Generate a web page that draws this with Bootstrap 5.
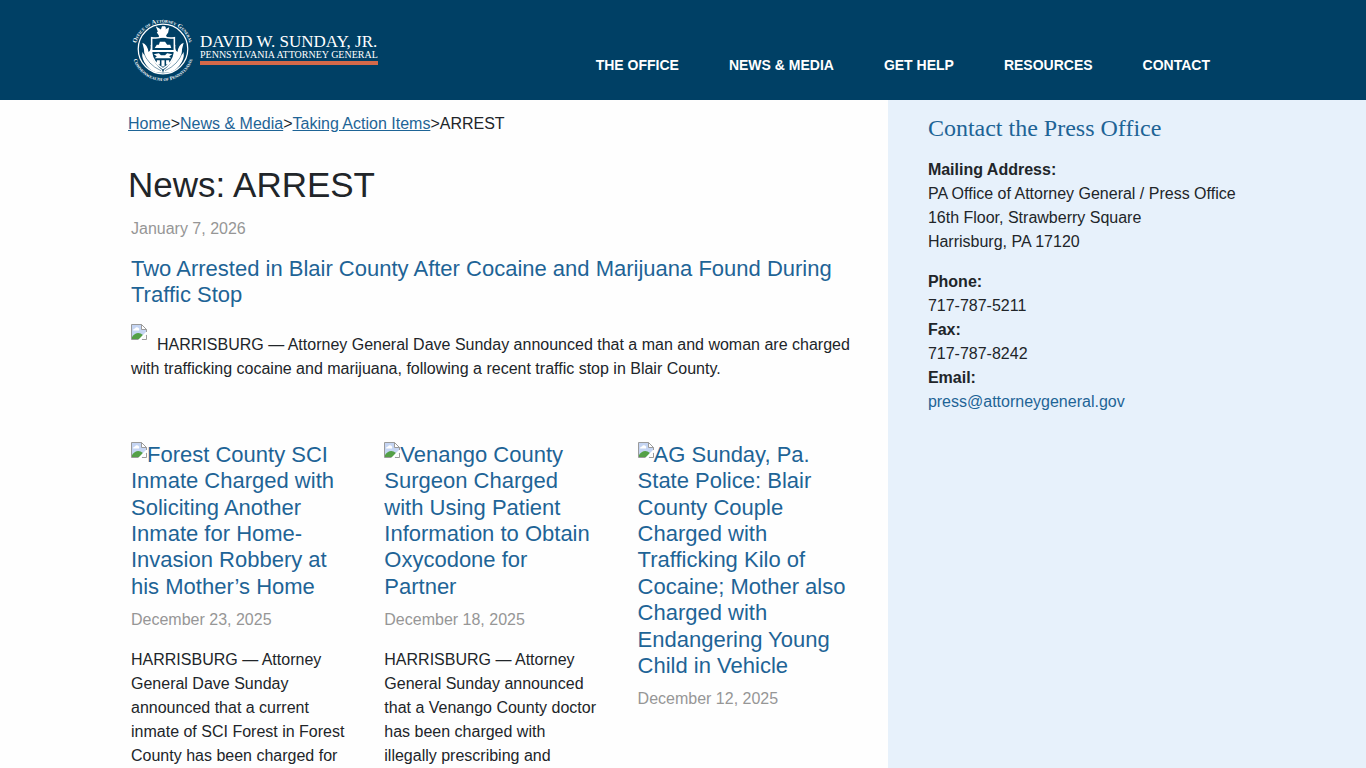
<!DOCTYPE html>
<html lang="en">
<head>
<meta charset="utf-8">
<meta name="viewport" content="width=device-width, initial-scale=1">
<title>News: ARREST</title>
<link href="https://cdn.jsdelivr.net/npm/bootstrap@5.3.0/dist/css/bootstrap.min.css" rel="stylesheet">
<style>
  :root { --navy: #004065; --link: #1e6496; --pale: #e7f1fb; --muted: #969696; }
  body { font-family: "Liberation Sans", Arial, sans-serif; font-size: 16px; line-height: 24px; color: #212529; background: #fefefe; }
  a { color: var(--link); }
  .site-header { background: var(--navy); min-height: 100px; padding: 0 131px 2px; }
  .brand { gap: 5px; }
  .brand-seal { width: 64px; height: 64px; }
  .brand-words { font-family: "Liberation Serif", "Times New Roman", serif; color: #fff; border-bottom: 4px solid #d4694a; padding-bottom: 1px; white-space: nowrap; }
  .brand-name { font-size: 17px; line-height: 16px; }
  .brand-role { font-size: 10px; line-height: 10px; }
  .site-nav { padding-top: 32px; }
  .site-nav .nav-link { color: #fff; font-size: 14px; font-weight: 700; line-height: 24px; padding: 4px 25px; text-transform: uppercase; }
  .main-col { width: 65%; padding: 12px 0 0 128px; }
  .side-col { width: 35%; padding: 15px 40px; background: var(--pale); }
  .page-title { font-size: 35px; line-height: 42px; margin: 28px 0 11px; font-weight: 400; }
  .story { padding: 0 34px 0 3px; }
  .story-title { font-size: 22px; line-height: 1.2; font-weight: 400; margin: 0; }
  .lead-title { margin: 15px 0; }
  .story-date { color: var(--muted); }
  .story-row { margin-top: 61px; }
  .thumb { width: 16px; height: 16px; vertical-align: top; }
  .thumb-lead { vertical-align: baseline; margin: 0 10px 10px 0; }
  .side-title { font-family: "Liberation Serif", "Times New Roman", serif; font-size: 24px; line-height: 26px; color: var(--link); margin: 0 0 17px; font-weight: 400; }
</style>
</head>
<body class="d-flex flex-column min-vh-100">
<svg class="d-none" aria-hidden="true">
  <symbol id="missing" viewBox="0 0 16 16">
    <path d="M.5.5h10l5 5v5l-5 5H.5z" fill="#c5d5f3"/>
    <path d="M2 6.500q0-2 2-2 1-2 3-1 2 1 1 3z" fill="#fff"/>
    <path d="M1 15v-2q5-7 11-2l-3 4z" fill="#54a047"/>
    <path d="M16 7v3l-6 6H7z" fill="#fff"/>
    <path d="M.5 15.500V.5h10l5 5V8M.5 15.500h7M11 15.500h4.500V11" fill="none" stroke="#9b9b9b"/>
    <path d="M10.500.5v5h5z" fill="#fff" stroke="#9b9b9b"/>
  </symbol>
</svg>

<header class="site-header d-flex justify-content-between align-items-center">
  <a href="#" class="brand d-flex align-items-center text-decoration-none">
    <svg class="brand-seal overflow-visible" viewBox="0 0 62 62" role="img" aria-label="Seal">
      <defs>
        <path id="arcTop" d="M5 37A26.500 26.500 0 1 1 57 37"/>
        <path id="arcBottom" d="M1 32A30 30 0 0 0 61 32"/>
      </defs>
      <g fill="#fff" font-family="Liberation Serif, serif" font-weight="700" font-variant="small-caps">
        <text text-anchor="middle" font-size="6"><textPath href="#arcTop" startOffset="50%">Office of Attorney General</textPath></text>
        <text text-anchor="middle" font-size="5"><textPath href="#arcBottom" startOffset="50%">Commonwealth of Pennsylvania</textPath></text>
      </g>
      <circle cx="31" cy="31" r="24" fill="none" stroke="#fff" stroke-width="1.200"/>
      <g fill="#fff">
        <path d="M11 25q5 2 6 9 3-2 2-7 4 4 2 12 1 6 9 12l1 3q-10 1-16-7-5-6-4-13l2 3q0-6-2-12z"/>
        <path d="M51 25q-5 2-6 9-3-2-2-7-4 4-2 12-1 6-9 12l-1 3q10 1 16-7 5-6 4-13l-2 3q0-6 2-12z"/>
      </g>
      <path d="M12 34q4 12 17 18M50 34q-4 12-17 18" stroke="var(--navy)" fill="none" stroke-width=".5"/>
      <path d="M20 20q6 1 11-1 5 2 11 1v15q-1 9-11 15-10-6-11-15z" fill="var(--navy)" stroke="#fff" stroke-width="1.500"/>
      <path d="M27 18l-2-3 1-1-2-5 5 3 1-3 3 0 1 2-1 1 4-2-1 5-2 3 1 2h-8z" fill="#fff"/>
      <path d="M23 30l2-3 2 0 1-3h5l2 3 3 0 1 3zM20 32h22v2H20zM22 36l5-1 2 2h4l2-2 5 1-3 2 2 2H23l2-2zM25 42h3v4h-3zM29.500 42h3v6h-3zM34 42h3v4h-3z" fill="#fff"/>
    </svg>
    <div class="brand-words">
      <div class="brand-name">DAVID W. SUNDAY, JR.</div>
      <div class="brand-role">PENNSYLVANIA ATTORNEY GENERAL</div>
    </div>
  </a>
  <nav class="site-nav nav flex-nowrap" aria-label="Main">
    <a class="nav-link" href="#">The Office</a>
    <a class="nav-link" href="#">News &amp; Media</a>
    <a class="nav-link" href="#">Get Help</a>
    <a class="nav-link" href="#">Resources</a>
    <a class="nav-link" href="#">Contact</a>
  </nav>
</header>

<div class="d-flex flex-grow-1">
  <main class="main-col">
    <nav aria-label="Breadcrumb"><a href="#">Home</a>&gt;<a href="#">News &amp; Media</a>&gt;<a href="#">Taking Action Items</a>&gt;<span>ARREST</span></nav>
    <h1 class="page-title">News: ARREST</h1>

    <article class="story">
      <div class="story-date">January 7, 2026</div>
      <h2 class="story-title lead-title"><a class="text-decoration-none" href="#">Two Arrested in Blair County After Cocaine and Marijuana Found During Traffic Stop</a></h2>
      <p class="mb-0"><svg class="thumb thumb-lead" aria-hidden="true"><use href="#missing"/></svg>HARRISBURG — Attorney General Dave Sunday announced that a man and woman are charged with trafficking cocaine and marijuana, following a recent traffic stop in Blair County.</p>
    </article>

    <div class="row g-0 story-row">
      <article class="col-4 story">
        <h2 class="story-title mb-2"><a class="text-decoration-none" href="#"><svg class="thumb" aria-hidden="true"><use href="#missing"/></svg>Forest County SCI Inmate Charged with Soliciting Another Inmate for Home-Invasion Robbery at his Mother’s Home</a></h2>
        <div class="story-date mb-3">December 23, 2025</div>
        <p class="mb-0">HARRISBURG — Attorney General Dave Sunday announced that a current inmate of SCI Forest in Forest County has been charged for</p>
      </article>
      <article class="col-4 story">
        <h2 class="story-title mb-2"><a class="text-decoration-none" href="#"><svg class="thumb" aria-hidden="true"><use href="#missing"/></svg>Venango County Surgeon Charged with Using Patient Information to Obtain Oxycodone for Partner</a></h2>
        <div class="story-date mb-3">December 18, 2025</div>
        <p class="mb-0">HARRISBURG — Attorney General Sunday announced that a Venango County doctor has been charged with illegally prescribing and</p>
      </article>
      <article class="col-4 story">
        <h2 class="story-title mb-2"><a class="text-decoration-none" href="#"><svg class="thumb" aria-hidden="true"><use href="#missing"/></svg>AG Sunday, Pa. State Police: Blair County Couple Charged with Trafficking Kilo of Cocaine; Mother also Charged with Endangering Young Child in Vehicle</a></h2>
        <div class="story-date">December 12, 2025</div>
      </article>
    </div>
  </main>

  <aside class="side-col">
    <h2 class="side-title">Contact the Press Office</h2>
    <p class="mb-3"><strong>Mailing Address:</strong><br>PA Office of Attorney General / Press Office<br>16th Floor, Strawberry Square<br>Harrisburg, PA 17120</p>
    <p class="mb-0"><strong>Phone:</strong><br>717-787-5211<br><strong>Fax:</strong><br>717-787-8242<br><strong>Email:</strong><br><a class="text-decoration-none" href="mailto:press@attorneygeneral.gov">press@attorneygeneral.gov</a></p>
  </aside>
</div>
<script src="https://cdn.jsdelivr.net/npm/bootstrap@5.3.0/dist/js/bootstrap.bundle.min.js"></script>
</body>
</html>
